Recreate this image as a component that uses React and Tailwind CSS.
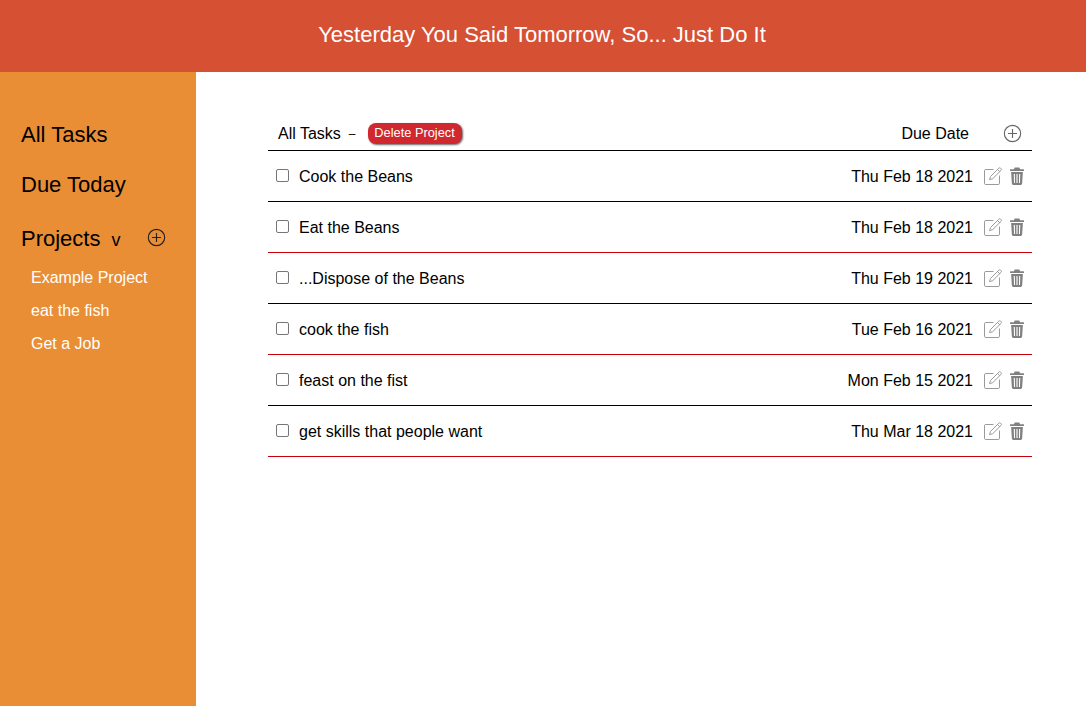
const tasks = [
  ["Cook the Beans", "Thu Feb 18 2021", "border-black"],
  ["Eat the Beans", "Thu Feb 18 2021", "border-[#c8000a]"],
  ["...Dispose of the Beans", "Thu Feb 19 2021", "border-black"],
  ["cook the fish", "Tue Feb 16 2021", "border-[#c8000a]"],
  ["feast on the fist", "Mon Feb 15 2021", "border-black"],
  ["get skills that people want", "Thu Mar 18 2021", "border-[#c8000a]"],
];

function Plus({ className, stroke }) {
  return (
    <svg viewBox="0 0 20 20" className={className} fill="none" stroke={stroke} strokeWidth="1.2">
      <circle cx="10" cy="10" r="8.6" />
      <path d="M10 5.2v9.6M5.2 10h9.6" />
    </svg>
  );
}

function Edit() {
  return (
    <svg viewBox="0 0 20 20" className="w-[20px] h-[20px]" fill="none" stroke="#9a9a9a" strokeWidth="1">
      <path d="M10.5 3.5H2.8A1.3 1.3 0 0 0 1.5 4.8v12.4a1.3 1.3 0 0 0 1.3 1.3h12.4a1.3 1.3 0 0 0 1.3-1.3V9.5" />
      <path d="M7.5 10.5 15.8 2.2a1.3 1.3 0 0 1 1.8 0l.4.4a1.3 1.3 0 0 1 0 1.8l-8.3 8.3-3.2.9z" />
      <path d="M14.5 3.5 16.8 5.8" />
    </svg>
  );
}

function Trash() {
  return (
    <svg viewBox="0 0 15 18" className="w-[14px] h-[18px]" preserveAspectRatio="none" fill="#808080">
      <path d="M5 0.5h5l.8 1.8H14.5a.5.5 0 0 1 .5.5v1.2H0V2.8a.5.5 0 0 1 .5-.5H4.2z" />
      <path d="M1.2 5h12.6l-.8 11.6A1.5 1.5 0 0 1 11.5 18h-8A1.5 1.5 0 0 1 2 16.6zM4 7l.3 9h1.1L5.2 7zm2.9 0v9h1.2V7zm2.9 0-.2 9h1.1L11 7z" />
    </svg>
  );
}

export default function App() {
  return (
    <div className="min-h-[706px] flex flex-col font-['Liberation_Sans',Arial,sans-serif] text-black bg-white">
      <header className="h-[72px] pb-[4px] pr-[2px] bg-[#d65034] flex items-center justify-center text-white text-[22px]">
        Yesterday You Said Tomorrow, So... Just Do It
      </header>
      <div className="flex flex-1">
        <aside className="w-[196px] h-[634px] bg-[#e98e35] pl-[21px] pt-[50px]">
          <div className="text-[22px] leading-[26px]">All Tasks</div>
          <div className="text-[22px] leading-[26px] mt-[24px]">Due Today</div>
          <div className="flex items-center mt-[28px] h-[26px]">
            <span className="text-[22px] leading-[26px]">Projects</span>
            <span className="text-[18px] ml-[11px] leading-[26px] mt-[2px]">v</span>
            <Plus className="w-[19px] h-[19px] ml-[27px] -mt-[4px]" stroke="#222" />
          </div>
          <ul className="mt-[16px] pl-[10px] text-white text-[16px] leading-[19px] flex flex-col gap-[14px]">
            <li>Example Project</li>
            <li>eat the fish</li>
            <li>Get a Job</li>
          </ul>
        </aside>
        <main className="flex-1 pl-[72px] pr-[54px] pt-[44px]">
          <div className="h-[35px] flex items-center border-b border-black pl-[10px] pr-[10px] text-[16px]">
            <span className="mt-[2px]">All Tasks</span>
            <span className="ml-[8px] text-[12px] mt-[2px]">–</span>
            <button className="ml-[12px] h-[21px] w-[94px] rounded-[8px] bg-[#d0282e] text-white text-[12.8px] shadow-[1px_1px_2px_rgba(0,0,0,0.6)]">
              Delete Project
            </button>
            <span className="ml-auto mt-[2px]">Due Date</span>
            <Plus className="w-[19px] h-[19px] ml-[34px] mt-[1px]" stroke="#666" />
          </div>
          {tasks.map(([name, date, border]) => (
            <div key={name} className={`h-[51px] flex items-center border-b ${border} pl-[8px] pr-[8px] text-[16px]`}>
              <span className="w-[13px] h-[13px] rounded-[2px] border border-[#767676] bg-white -mt-[2px]" />
              <span className="ml-[10px] mt-[2px]">{name}</span>
              <span className="ml-auto mt-[2px]">{date}</span>
              <span className="ml-[10px] flex items-center gap-[7px]">
                <Edit />
                <Trash />
              </span>
            </div>
          ))}
        </main>
      </div>
    </div>
  );
}
